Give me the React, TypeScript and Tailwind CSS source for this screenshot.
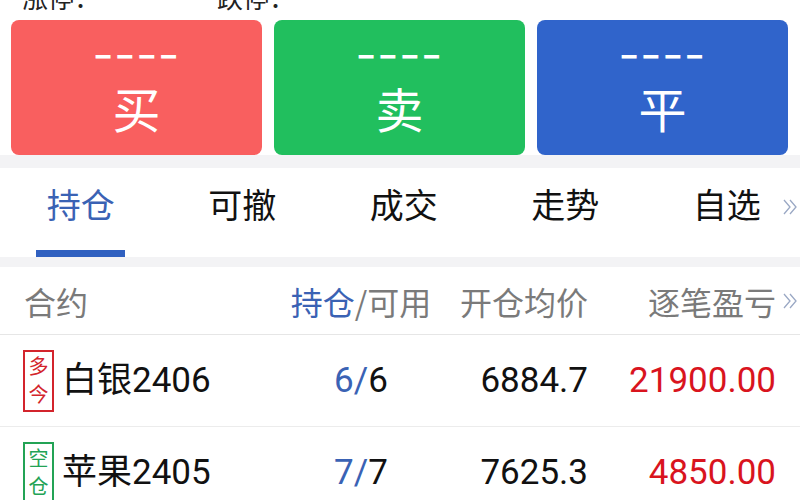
import React from "react";

const font = { fontFamily: '"Noto Sans CJK SC", "Noto Sans", sans-serif' };
const numFont = { fontFamily: 'Roboto, "Noto Sans CJK SC", sans-serif' };

function DoubleChevron({ className }: { className?: string }) {
  return (
    <svg viewBox="0 0 16 18" className={className} fill="none" stroke="currentColor" strokeWidth="1.3">
      <path d="M2 2l6 7-6 7" />
      <path d="M8 2l6 7-6 7" />
    </svg>
  );
}

function ActionButton({ label, color }: { label: string; color: string }) {
  return (
    <div className={`flex h-[135px] flex-1 flex-col items-center rounded-[8px] text-white ${color}`}>
      <div className="mt-[22px] h-[20px] text-[32px] font-bold leading-[20px] tracking-[1px] scale-x-[1.7]">----</div>
      <div className="mt-[17px] text-[48px] leading-[56px]">{label}</div>
    </div>
  );
}

function Badge({ top, bottom, tone }: { top: string; bottom: string; tone: "red" | "green" }) {
  const cls = tone === "red" ? "border-[#d3242c] text-[#d3242c]" : "border-[#23a355] text-[#23a355]";
  return (
    <div className={`flex h-[62px] w-[31px] flex-col items-center justify-center border-2 text-[20px] leading-[28px] ${cls}`}>
      <span>{top}</span>
      <span>{bottom}</span>
    </div>
  );
}

type Row = { badge: [string, string, "red" | "green"]; name: string; hold: string; avail: string; price: string; pnl: string };

const rows: Row[] = [
  { badge: ["多", "今", "red"], name: "白银2406", hold: "6", avail: "6", price: "6884.7", pnl: "21900.00" },
  { badge: ["空", "仓", "green"], name: "苹果2405", hold: "7", avail: "7", price: "7625.3", pnl: "4850.00" },
];

const tabs = ["持仓", "可撤", "成交", "走势", "自选"];

export default function App() {
  return (
    <div className="h-[500px] w-[800px] overflow-hidden bg-white text-[#111]" style={font}>
      {/* price limits, scrolled mostly out of view */}
      <div className="h-[20px] overflow-hidden">
        <div className="-mt-[16px] flex text-[26px] leading-[26px] text-[#222]">
          <span className="ml-[22px] w-[195px]">涨停：</span>
          <span>跌停：</span>
        </div>
      </div>

      <div className="flex gap-[12px] pl-[11px] pr-[12px]">
        <ActionButton label="买" color="bg-[#f95f5f]" />
        <ActionButton label="卖" color="bg-[#21bf5e]" />
        <ActionButton label="平" color="bg-[#3064cb]" />
      </div>

      <div className="h-[13px] bg-[#f3f3f5]" />

      <div className="relative flex h-[89px]">
        {tabs.map((t, i) => (
          <div key={t} className="flex w-[161.5px] shrink-0 flex-col items-center">
            <div className={`pt-[19px] text-[34px] leading-[34px] ${i === 0 ? "text-[#3a62b4]" : "text-[#111]"}`}>{t}</div>
            <div className="flex-1" />
            {i === 0 && <div className="h-[7px] w-[89px] bg-[#3060c0]" />}
          </div>
        ))}
        <div className="absolute right-0 top-0 flex h-full w-[18px] items-start bg-white pt-[30px]">
          <DoubleChevron className="h-[18px] w-[16px] text-[#9aa8c4]" />
        </div>
      </div>

      <div className="h-[10px] bg-[#f3f3f5]" />

      <div className="flex h-[68px] items-center border-b border-[#e6e6e6] pl-[24px] text-[32px] leading-[40px] text-[#7a7a7a]">
        <div className="flex-1">合约</div>
        <div className="w-[150px] text-center">
          <span className="text-[#3a62b4]">持仓</span>/可用
        </div>
        <div className="w-[152px] text-right">开仓均价</div>
        <div className="flex w-[212px] items-center justify-end">
          <span>逐笔盈亏</span>
          <span className="flex w-[24px] justify-end pr-[2px]">
            <DoubleChevron className="h-[18px] w-[16px] text-[#9aa8c4]" />
          </span>
        </div>
      </div>

      {rows.map((r) => (
        <div key={r.name} className="flex h-[92px] items-center border-b border-[#ececec] pl-[23px] text-[35px] leading-[40px]" style={numFont}>
          <div className="flex flex-1 items-center gap-[8px]">
            <Badge top={r.badge[0]} bottom={r.badge[1]} tone={r.badge[2]} />
            <span>{r.name}</span>
          </div>
          <div className="w-[150px] text-center">
            <span className="text-[#3a62b4]">{r.hold}/</span>
            {r.avail}
          </div>
          <div className="w-[152px] text-right">{r.price}</div>
          <div className="w-[188px] text-right text-[#d9141e]">{r.pnl}</div>
          <div className="w-[24px]" />
        </div>
      ))}
    </div>
  );
}
